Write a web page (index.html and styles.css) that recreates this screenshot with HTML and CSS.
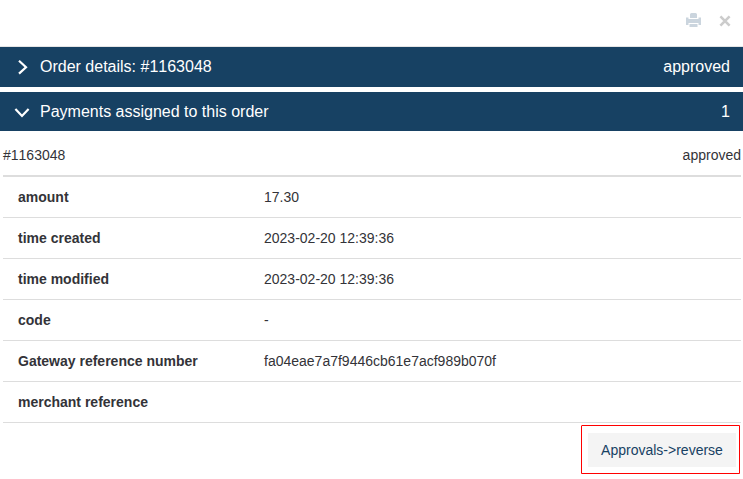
FILE: index.html
```html
<!DOCTYPE html>
<html lang="en">
<head>
<meta charset="utf-8">
<title>Order details</title>
<link rel="stylesheet" href="styles.css">
</head>
<body>
<header class="toolbar">
  <svg class="print" width="15" height="14" viewBox="0 0 15 14" role="img" aria-label="Print"><path d="M4 5V1.500Q4 0 5.500 0h4Q11 0 11 1.500V5z M0 4.500h2.500V6h10V4.500H15V12h-2.500V10h-10v2H0z M3.500 11h8v3h-8z"/></svg>
  <svg class="close" width="12" height="12" viewBox="0 0 12 12" role="img" aria-label="Close"><path d="M1.400 1.400l9.200 9.200M10.600 1.400L1.400 10.600"/></svg>
</header>
<section class="bar bar-order">
  <svg class="chevron" width="16" height="16" viewBox="0 0 16 16"><path d="M5 1.800l7 6.400-7 6.400"/></svg>
  <span class="title">Order details: <span class="number">#1163048</span></span>
  <span>approved</span>
</section>
<section class="bar bar-payments">
  <svg class="chevron" width="16" height="16" viewBox="0 0 16 16"><path d="M1.400 5l6.600 7 6.600-7"/></svg>
  <span class="title">Payments assigned to this order</span>
  <span>1</span>
</section>
<main class="payment">
  <div class="summary"><span class="number">#1163048</span><span>approved</span></div>
  <dl class="details">
    <div class="row"><dt>amount</dt><dd>17.30</dd></div>
    <div class="row"><dt>time created</dt><dd>2023-02-20 12:39:36</dd></div>
    <div class="row"><dt>time modified</dt><dd>2023-02-20 12:39:36</dd></div>
    <div class="row"><dt>code</dt><dd>-</dd></div>
    <div class="row"><dt>Gateway reference number</dt><dd>fa04eae7a7f9446cb61e7acf989b070f</dd></div>
    <div class="row"><dt>merchant reference</dt><dd></dd></div>
  </dl>
  <div class="actions"><div class="action-frame"><button class="reverse">Approvals-&gt;reverse</button></div></div>
</main>
</body>
</html>
```
FILE: styles.css
```css
* { box-sizing: border-box; }
body { margin: 0; height: 479px; overflow: hidden; background: #fff; color: #333338; font: 14px/20px "Liberation Sans", Arial, sans-serif; }
.toolbar { height: 47px; display: flex; justify-content: flex-end; gap: 18px; padding: 13px 12px 0 0; border-bottom: 1px solid #e5e5e5; }
.print { fill: #cbd5de; }
.close { margin-top: 2px; fill: none; stroke: #ccc; stroke-width: 2.600; }
.bar { display: flex; align-items: center; padding: 0 13px 0 14px; background: #174163; color: #fff; font-size: 16px; }
.bar-order { height: 40px; margin-bottom: 5px; }
.bar-payments { height: 39px; }
.chevron { margin-right: 10px; fill: none; stroke: #fff; stroke-width: 2.200; }
.title { flex: 1; }
.number { font-kerning: none; }
.payment { padding: 4px 2px 0 3px; }
.summary { height: 42px; display: flex; justify-content: space-between; padding-top: 10px; border-bottom: 2px solid #ddd; }
.details { margin: 0; }
.row { height: 41px; display: grid; grid-template-columns: 246px 1fr; align-items: center; padding-left: 15px; border-bottom: 1px solid #ddd; }
dt { font-weight: bold; }
dd { margin: 0; }
.actions { display: flex; justify-content: flex-end; padding: 2px 1px 0 0; }
.action-frame { width: 159px; height: 49px; padding: 7px 3px 6px 6px; border: 1px solid #f00; border-top-left-radius: 1px; }
.reverse { display: block; width: 148px; height: 34px; padding: 0; border: 0; background: #f4f4f4; color: #174163; font: inherit; }
```
